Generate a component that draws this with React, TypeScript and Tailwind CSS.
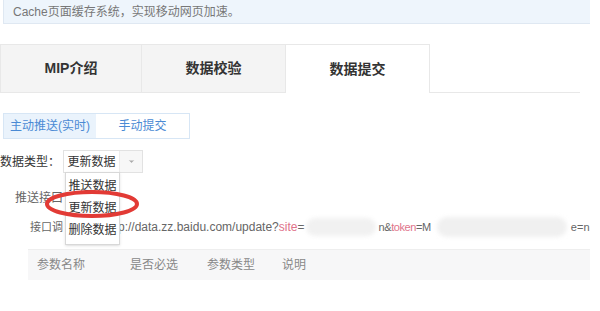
import { ChevronDown } from "lucide-react";

const font = { fontFamily: '"Liberation Sans", "Noto Sans CJK SC", sans-serif' };

const App = () => {
  return (
    <div className="relative w-[600px] h-[311px] bg-white overflow-hidden text-[12px] text-[#666] whitespace-nowrap" style={font}>
      {/* top notice */}
      <div className="ml-[3px] w-[587px] h-[24px] bg-[#eef5fc] border-b border-l border-[#dfe8f2] pl-[9px] pt-[3px] text-[#777]">
        Cache页面缓存系统，实现移动网页加速。
      </div>

      {/* main tabs */}
      <div className="mt-[20px] flex h-[49px]">
        <div className="w-[142px] flex items-center justify-center bg-[#f4f4f4] border border-[#e8e8e8] text-[14px] font-bold text-[#333]">
          MIP介绍
        </div>
        <div className="w-[144px] flex items-center justify-center bg-[#f4f4f4] border-y border-r border-[#e8e8e8] text-[14px] font-bold text-[#333]">
          数据校验
        </div>
        <div className="w-[144px] flex items-center justify-center bg-white border-t border-r border-[#e8e8e8] text-[14px] font-bold text-[#333]">
          数据提交
        </div>
        <div className="w-[150px] border-b border-[#e8e8e8]" />
      </div>

      {/* sub tabs */}
      <div className="mt-[20px] ml-[3px] flex h-[26px] w-[187px] border border-[#d7e6f5]">
        <div className="w-[92px] flex items-center justify-center bg-[#eaf3fc] text-[#4a8ad4]">主动推送(实时)</div>
        <div className="flex-1 flex items-center justify-center bg-white text-[#4a8ad4]">手动提交</div>
      </div>

      {/* data type */}
      <div className="mt-[11px] flex items-center h-[23px]">
        <span className="text-[#333] w-[63px]">数据类型：</span>
        <div className="relative flex h-[23px] border border-[#e2e2e2]">
          <div className="w-[56px] flex items-center justify-center text-[#333] border-r border-[#ececec]">更新数据</div>
          <div className="w-[22px] flex items-center justify-center bg-[#f7f7f7]">
            <ChevronDown className="w-[9px] h-[9px] text-[#aaa]" fill="#aaa" strokeWidth={1} />
          </div>
          {/* dropdown */}
          <div className="absolute left-[1px] top-[21px] w-[55px] bg-white border border-[#d8d8d8] shadow-sm z-10 flex flex-col text-[#333] pt-[2px] pb-[3px]">
            <div className="h-[22px] flex items-center justify-center">推送数据</div>
            <div className="h-[22px] flex items-center justify-center">更新数据</div>
            <div className="h-[22px] flex items-center justify-center">删除数据</div>
          </div>
          {/* red marker */}
          <svg className="absolute left-[-20px] top-[38px] z-20" width="96" height="30" viewBox="0 0 96 30">
            <ellipse cx="48" cy="15" rx="45" ry="12" fill="none" stroke="#e23a35" strokeWidth="4" />
          </svg>
        </div>
      </div>

      {/* push api */}
      <div className="mt-[16px] ml-[15px] text-[#666]">推送接口</div>
      <div className="mt-[10px] ml-[30px] flex items-center text-[#666]">
        <span className="text-[11px] w-[88px]">接口调</span>
        <span>p://data.zz.baidu.com/update?</span>
        <span className="text-[#e0738a]">site</span>
        <span>=</span>
        <span className="w-[70px] h-[18px] ml-[2px] rounded-full bg-[#f1f1f1] blur-[2px]" />
        <span className="ml-[2px] text-[11px] tracking-[-0.4px]">n&amp;</span>
        <span className="text-[11px] tracking-[-0.4px] text-[#e0738a]">token</span>
        <span className="text-[11px] tracking-[-0.4px]">=M</span>
        <span className="w-[130px] h-[20px] ml-[6px] rounded-full bg-[#f0f0f0] blur-[2px]" />
        <span className="ml-[4px] text-[11px]">e=n</span>
      </div>

      {/* params table header */}
      <div className="mt-[12px] ml-[28px] w-[562px] border-t border-[#eee] h-[31px] bg-[#f7f7f8] flex items-center text-[#888]">
        <span className="ml-[9px] w-[93px]">参数名称</span>
        <span className="w-[77px]">是否必选</span>
        <span className="w-[75px]">参数类型</span>
        <span>说明</span>
      </div>
    </div>
  );
};

export default App;
